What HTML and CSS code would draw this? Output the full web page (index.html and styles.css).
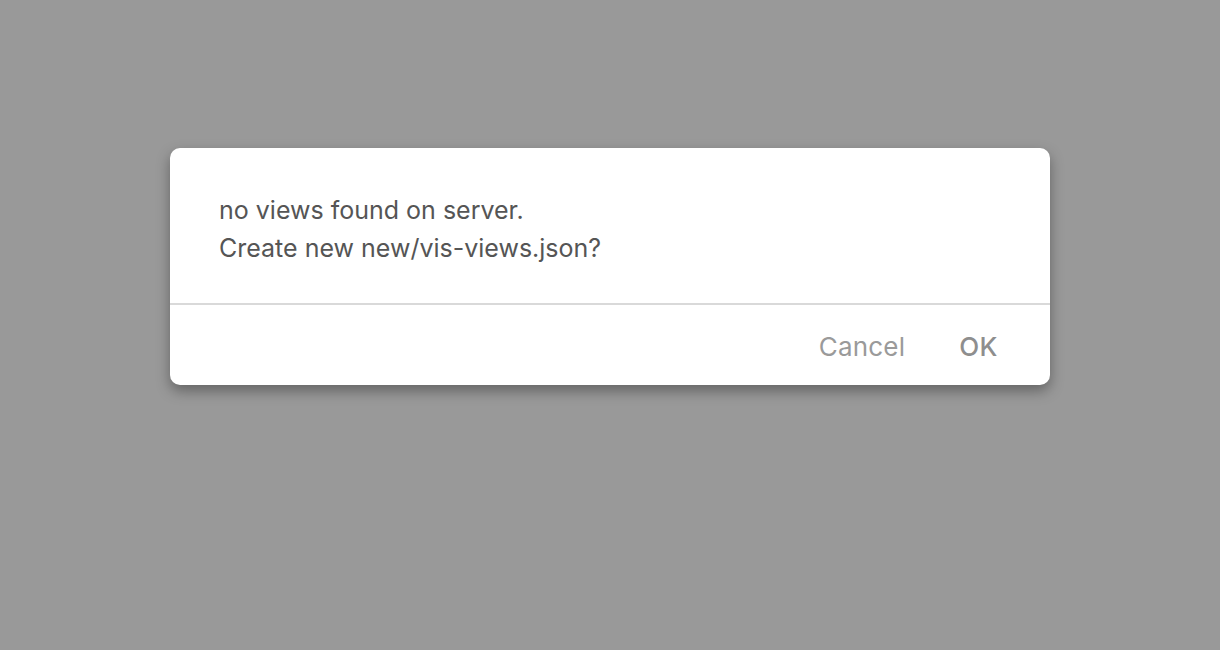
FILE: index.html
```html
<!DOCTYPE html>
<html>
<head>
<meta charset="utf-8">
<link rel="stylesheet" href="styles.css">
</head>
<body>
<div class="overlay">
  <div class="dialog">
    <div class="dialog-body">
      <p class="message">no views found on server.<br>Create new new/vis-views.json?</p>
    </div>
    <div class="dialog-footer">
      <button class="btn btn-cancel">Cancel</button>
      <button class="btn btn-ok">OK</button>
    </div>
  </div>
</div>
</body>
</html>
```
FILE: styles.css
```css
html, body {
  margin: 0;
  padding: 0;
  height: 100%;
}
body {
  background: #999999;
  font-family: "Inter", "Liberation Sans", Arial, sans-serif;
}
.overlay {
  display: flex;
  justify-content: center;
  padding-top: 148px;
}
.dialog {
  width: 880px;
  background: #ffffff;
  border-radius: 10px;
  box-shadow: 0 6px 14px rgba(0, 0, 0, 0.35);
  overflow: hidden;
}
.dialog-body {
  height: 157px;
  padding: 0 49px;
  box-sizing: border-box;
  border-bottom: 2px solid #d9d9d9;
  display: flex;
  align-items: center;
}
.message {
  margin: 0;
  font-size: 25px;
  line-height: 38px;
  color: #555555;
  padding-top: 6px;
}
.dialog-footer {
  height: 80px;
  box-sizing: border-box;
  padding-top: 3px;
  display: flex;
  justify-content: flex-end;
  align-items: center;
  padding-right: 52px;
  gap: 54px;
}
.btn {
  border: none;
  background: none;
  padding: 0;
  font-family: inherit;
  font-size: 26px;
  color: #9a9a9a;
  cursor: pointer;
}
.btn-cancel {
  letter-spacing: 0.2px;
}
.btn-ok {
  color: #8e8e8e;
  font-weight: 500;
  letter-spacing: 0.5px;
}
```
